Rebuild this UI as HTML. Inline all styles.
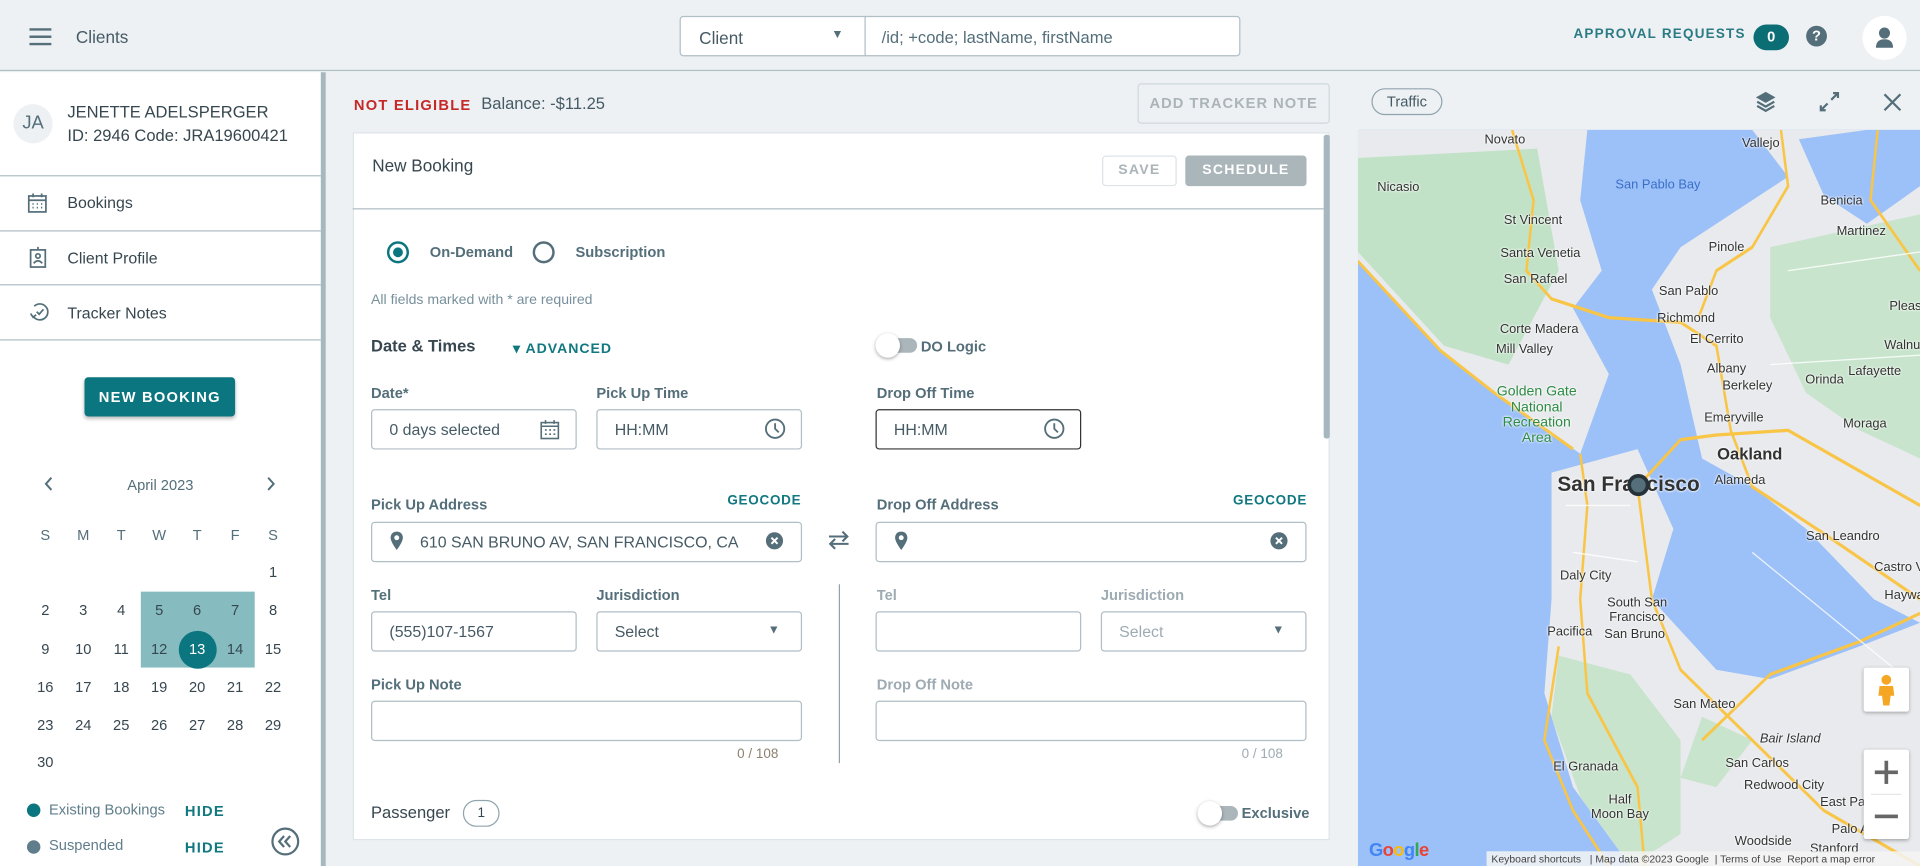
<!DOCTYPE html>
<html><head><meta charset="utf-8">
<style>
*{box-sizing:border-box;margin:0;padding:0}
html,body{width:1920px;height:866px;overflow:hidden;background:#eef1f4}
#r{position:absolute;left:0;top:0;width:1568px;height:707px;transform:scale(1.22449,1.2249);transform-origin:0 0;font-family:"Liberation Sans",sans-serif;color:#455a64;background:#eef1f4}
.a{position:absolute;white-space:nowrap}
.in{position:absolute;border:1px solid #b0bec5;border-radius:3px;background:#fff;font-size:13px;color:#455a64;padding-left:14px;display:flex;align-items:center}
.lbl{position:absolute;font-size:12px;font-weight:bold;color:#546e7a;white-space:nowrap}
.lt{color:#9eabb3}
.teal{color:#127880}
.cal{position:absolute;width:24px;text-align:center;font-size:12px;color:#37474f}
.m{position:absolute;font-size:10.5px;color:#333;white-space:nowrap;transform:translateX(-50%);text-shadow:0 0 2px #fff,0 0 2px #fff}
</style></head><body><div id="r">

<!-- header -->
<div class="a" style="left:0;top:0;width:1568px;height:58px;border-bottom:1px solid #b0bec5;background:#eef1f4"></div>
<svg class="a" style="left:24px;top:23px" width="18" height="14"><rect y="0" width="18" height="2" fill="#546e7a"/><rect y="6" width="18" height="2" fill="#546e7a"/><rect y="12" width="18" height="2" fill="#546e7a"/></svg>
<div class="a" style="left:62px;top:22px;font-size:14px;color:#455a64">Clients</div>
<div class="a" style="left:555px;top:13px;width:152px;height:33px;border:1px solid #b0bec5;border-radius:3px 0 0 3px;background:#fff"></div>
<div class="a" style="left:571px;top:23px;font-size:14px;color:#455a64">Client</div>
<div class="a" style="left:679px;top:23px;font-size:10px;color:#546e7a">▼</div>
<div class="a" style="left:706px;top:13px;width:307px;height:33px;border:1px solid #b0bec5;border-radius:0 3px 3px 0;background:#fff"></div>
<div class="a" style="left:720px;top:23px;font-size:13.5px;color:#546e7a">/id; +code; lastName, firstName</div>
<div class="a" style="left:1285px;top:22px;font-size:11px;font-weight:bold;letter-spacing:1px;color:#2a7b84">APPROVAL REQUESTS</div>
<div class="a" style="left:1432px;top:20px;width:29px;height:21px;border-radius:11px;background:#0b6e75;color:#fff;font-size:12px;font-weight:bold;text-align:center;line-height:21px">0</div>
<div class="a" style="left:1475px;top:21px;width:17px;height:17px;border-radius:50%;background:#546e7a;color:#fff;font-size:12px;font-weight:bold;text-align:center;line-height:17px">?</div>
<div class="a" style="left:1521px;top:13px;width:36px;height:36px;border-radius:50%;background:#fff"></div>
<svg class="a" style="left:1530px;top:21px" width="18" height="20"><circle cx="9" cy="6" r="4.5" fill="#546e7a"/><path d="M2 18 Q2 11 9 11 Q16 11 16 18Z" fill="#546e7a"/></svg>

<!-- left panel -->
<div class="a" style="left:0;top:59px;width:262px;height:648px;background:#fff"></div>
<div class="a" style="left:262px;top:59px;width:4px;height:648px;background:#a7b7bf"></div>
<div class="a" style="left:11px;top:85px;width:32px;height:32px;border-radius:50%;background:#eef1f4;font-size:15px;color:#546e7a;text-align:center;line-height:32px">JA</div>
<div class="a" style="left:55px;top:84px;font-size:13.5px;color:#37474f">JENETTE ADELSPERGER</div>
<div class="a" style="left:55px;top:103px;font-size:13.5px;color:#37474f">ID: 2946 Code: JRA19600421</div>
<div class="a" style="left:0;top:143px;width:262px;height:1px;background:#b0bec5"></div>
<div class="a" style="left:0;top:188px;width:262px;height:1px;background:#b0bec5"></div>
<div class="a" style="left:0;top:232px;width:262px;height:1px;background:#b0bec5"></div>
<div class="a" style="left:0;top:277px;width:262px;height:1px;background:#b0bec5"></div>
<svg class="a" style="left:22px;top:157px" width="17" height="17" fill="none" stroke="#546e7a" stroke-width="1.4"><rect x="1.5" y="3" width="14" height="13"/><line x1="1.5" y1="6.5" x2="15.5" y2="6.5"/><line x1="5" y1="1" x2="5" y2="4"/><line x1="12" y1="1" x2="12" y2="4"/><path d="M4.5 9.5h1M8 9.5h1M11.5 9.5h1M4.5 12.5h1M8 12.5h1M11.5 12.5h1"/></svg>
<div class="a" style="left:55px;top:158px;font-size:13px;color:#37474f">Bookings</div>
<svg class="a" style="left:24px;top:201px" width="14" height="18" fill="none" stroke="#546e7a" stroke-width="1.4"><rect x="1" y="3" width="12" height="14"/><circle cx="7" cy="8" r="1.8"/><path d="M3.5 14 Q7 10 10.5 14"/><line x1="7" y1="0.5" x2="7" y2="3"/></svg>
<div class="a" style="left:55px;top:203px;font-size:13px;color:#37474f">Client Profile</div>
<svg class="a" style="left:23px;top:246px" width="18" height="17" fill="none" stroke="#546e7a" stroke-width="1.4"><path d="M4 12 A6.5 6.5 0 1 0 5 4"/><path d="M2 10 L4 13 L6.5 11"/><path d="M7 8.5 L9 10.5 L12.5 6.5"/></svg>
<div class="a" style="left:55px;top:248px;font-size:13px;color:#37474f">Tracker Notes</div>
<div class="a" style="left:69px;top:308px;width:123px;height:32px;background:#0b7680;border-radius:3px;box-shadow:0 2px 3px rgba(0,0,0,.25);color:#fff;font-size:12px;font-weight:bold;letter-spacing:1px;text-align:center;line-height:32px">NEW BOOKING</div>

<svg class="a" style="left:36px;top:389px" width="8" height="12" fill="none" stroke="#546e7a" stroke-width="1.6"><path d="M6 1 L1.5 6 L6 11"/></svg>
<svg class="a" style="left:217px;top:389px" width="8" height="12" fill="none" stroke="#546e7a" stroke-width="1.6"><path d="M2 1 L6.5 6 L2 11"/></svg>
<div class="a" style="left:0;top:389px;width:262px;text-align:center;font-size:12px;color:#546e7a">April 2023</div>
<div class="a" style="left:115px;top:483px;width:93px;height:62px;background:#86bcbf"></div>
<div class="a" style="left:146px;top:515px;width:31px;height:31px;border-radius:50%;background:#0b7680"></div>
<div id="cal"></div>

<div class="a" style="left:22px;top:656px;width:11px;height:11px;border-radius:50%;background:#0b7680"></div>
<div class="a" style="left:40px;top:654px;font-size:12px;color:#607d8b">Existing Bookings</div>
<div class="a teal" style="left:151px;top:655px;font-size:12px;font-weight:bold;letter-spacing:1px">HIDE</div>
<div class="a" style="left:22px;top:686px;width:11px;height:11px;border-radius:50%;background:#607d8b"></div>
<div class="a" style="left:40px;top:683px;font-size:12px;color:#607d8b">Suspended</div>
<div class="a teal" style="left:151px;top:685px;font-size:12px;font-weight:bold;letter-spacing:1px">HIDE</div>
<svg class="a" style="left:221px;top:675px" width="24" height="24" fill="none" stroke="#546e7a" stroke-width="1.8"><circle cx="12" cy="12" r="10.5"/><path d="M11 7.5 L7 12 L11 16.5 M16 7.5 L12 12 L16 16.5"/></svg>

<!-- main -->
<div class="a" style="left:289px;top:79px;font-size:12px;font-weight:bold;letter-spacing:1px;color:#c62828">NOT ELIGIBLE</div>
<div class="a" style="left:393px;top:77px;font-size:13.5px;color:#455a64">Balance: -$11.25</div>
<div class="a" style="left:929px;top:68px;width:157px;height:33px;border:1px solid #cfd8dc;border-radius:3px;color:#aab4b9;font-size:12px;font-weight:bold;letter-spacing:.8px;text-align:center;line-height:31px">ADD TRACKER NOTE</div>

<div class="a" style="left:288px;top:108px;width:798px;height:578px;background:#fff;border:1px solid #dde3e7"></div>
<div class="a" style="left:1081px;top:110px;width:5px;height:248px;background:#a7b7bf;border-radius:2px"></div>
<div class="a" style="left:288px;top:170px;width:793px;height:1px;background:#b0bec5"></div>
<div class="a" style="left:304px;top:127px;font-size:14px;color:#37474f">New Booking</div>
<div class="a" style="left:900px;top:127px;width:61px;height:25px;border:1px solid #dde3e7;border-radius:3px;color:#aab4b9;font-size:11.5px;font-weight:bold;letter-spacing:1px;text-align:center;line-height:23px">SAVE</div>
<div class="a" style="left:968px;top:127px;width:99px;height:25px;background:#abb6bb;border-radius:3px;color:#fff;font-size:11.5px;font-weight:bold;letter-spacing:1px;text-align:center;line-height:25px">SCHEDULE</div>

<div class="a" style="left:316px;top:197px;width:18px;height:18px;border-radius:50%;border:2px solid #0b7680"></div>
<div class="a" style="left:321px;top:202px;width:8px;height:8px;border-radius:50%;background:#0b7680"></div>
<div class="lbl" style="left:351px;top:199px;font-size:12px">On-Demand</div>
<div class="a" style="left:435px;top:197px;width:18px;height:18px;border-radius:50%;border:2px solid #546e7a"></div>
<div class="lbl" style="left:470px;top:199px;font-size:12px">Subscription</div>
<div class="a" style="left:303px;top:239px;font-size:11.5px;color:#78909c">All fields marked with * are required</div>
<div class="a" style="left:303px;top:275px;font-size:13.5px;font-weight:bold;color:#37474f">Date &amp; Times</div>
<div class="a teal" style="left:419px;top:277px;font-size:11.5px;font-weight:bold;letter-spacing:.8px">▾ ADVANCED</div>
<div class="a" style="left:718px;top:276px;width:31px;height:12px;border-radius:6px;background:#abb6bb"></div>
<div class="a" style="left:715px;top:272px;width:20px;height:20px;border-radius:50%;background:#fff;box-shadow:0 1px 3px rgba(0,0,0,.35)"></div>
<div class="lbl" style="left:752px;top:276px">DO Logic</div>

<div class="lbl" style="left:303px;top:314px">Date*</div>
<div class="lbl" style="left:487px;top:314px">Pick Up Time</div>
<div class="lbl" style="left:716px;top:314px">Drop Off Time</div>
<div class="in" style="left:303px;top:334px;width:168px;height:33px">0 days selected</div>
<svg class="a" style="left:441px;top:342px" width="16" height="17" fill="none" stroke="#546e7a" stroke-width="1.3"><rect x="1" y="3" width="14" height="13"/><line x1="1" y1="6" x2="15" y2="6"/><line x1="4.5" y1="1" x2="4.5" y2="4"/><line x1="11.5" y1="1" x2="11.5" y2="4"/><path d="M4 9h1.5M7.5 9h1.5M11 9h1.5M4 12.5h1.5M7.5 12.5h1.5M11 12.5h1.5"/></svg>
<div class="in" style="left:487px;top:334px;width:168px;height:33px">HH:MM</div>
<svg class="a" style="left:624px;top:341px" width="18" height="18" fill="none" stroke="#546e7a" stroke-width="1.5"><circle cx="9" cy="9" r="7.5"/><path d="M9 4.5 V9 L12 12"/></svg>
<div class="in" style="left:715px;top:334px;width:168px;height:33px;border-color:#333">HH:MM</div>
<svg class="a" style="left:852px;top:341px" width="18" height="18" fill="none" stroke="#546e7a" stroke-width="1.5"><circle cx="9" cy="9" r="7.5"/><path d="M9 4.5 V9 L12 12"/></svg>

<div class="lbl" style="left:303px;top:405px">Pick Up Address</div>
<div class="a teal" style="left:594px;top:403px;font-size:11px;font-weight:bold;letter-spacing:.6px">GEOCODE</div>
<div class="lbl" style="left:716px;top:405px">Drop Off Address</div>
<div class="a teal" style="left:1007px;top:403px;font-size:11px;font-weight:bold;letter-spacing:.6px">GEOCODE</div>
<div class="in" style="left:303px;top:426px;width:352px;height:33px;padding-left:39px;font-size:13px">610 SAN BRUNO AV, SAN FRANCISCO, CA</div>
<svg class="a" style="left:318px;top:433px" width="12" height="17"><path d="M6 1 C2.5 1 1 3.5 1 6 C1 9.5 6 16 6 16 C6 16 11 9.5 11 6 C11 3.5 9.5 1 6 1Z" fill="#546e7a"/><circle cx="6" cy="6" r="2" fill="#fff"/></svg>
<svg class="a" style="left:625px;top:434px" width="15" height="15"><circle cx="7.5" cy="7.5" r="7" fill="#546e7a"/><path d="M5 5 L10 10 M10 5 L5 10" stroke="#fff" stroke-width="1.6"/></svg>
<svg class="a" style="left:676px;top:433px" width="18" height="16" fill="none" stroke="#546e7a" stroke-width="1.7"><path d="M1 5 H16 M12 1 L16 5 L12 9"/><path d="M17 11 H2 M6 7 L2 11 L6 15"/></svg>
<div class="in" style="left:715px;top:426px;width:352px;height:33px"></div>
<svg class="a" style="left:730px;top:433px" width="12" height="17"><path d="M6 1 C2.5 1 1 3.5 1 6 C1 9.5 6 16 6 16 C6 16 11 9.5 11 6 C11 3.5 9.5 1 6 1Z" fill="#546e7a"/><circle cx="6" cy="6" r="2" fill="#fff"/></svg>
<svg class="a" style="left:1037px;top:434px" width="15" height="15"><circle cx="7.5" cy="7.5" r="7" fill="#546e7a"/><path d="M5 5 L10 10 M10 5 L5 10" stroke="#fff" stroke-width="1.6"/></svg>

<div class="a" style="left:685px;top:477px;width:1px;height:146px;background:#90a4ae"></div>
<div class="lbl" style="left:303px;top:479px">Tel</div>
<div class="lbl" style="left:487px;top:479px">Jurisdiction</div>
<div class="lbl lt" style="left:716px;top:479px">Tel</div>
<div class="lbl lt" style="left:899px;top:479px">Jurisdiction</div>
<div class="in" style="left:303px;top:499px;width:168px;height:33px">(555)107-1567</div>
<div class="in" style="left:487px;top:499px;width:168px;height:33px">Select</div>
<div class="a" style="left:627px;top:509px;font-size:10px;color:#546e7a">▼</div>
<div class="in" style="left:715px;top:499px;width:168px;height:33px"></div>
<div class="in" style="left:899px;top:499px;width:168px;height:33px;color:#9eabb3">Select</div>
<div class="a" style="left:1039px;top:509px;font-size:10px;color:#546e7a">▼</div>

<div class="lbl" style="left:303px;top:552px">Pick Up Note</div>
<div class="lbl lt" style="left:716px;top:552px">Drop Off Note</div>
<div class="in" style="left:303px;top:572px;width:352px;height:33px"></div>
<div class="in" style="left:715px;top:572px;width:352px;height:33px"></div>
<div class="a" style="left:602px;top:610px;font-size:11px;color:#8d8070">0 / 108</div>
<div class="a" style="left:1014px;top:610px;font-size:11px;color:#9eabb3">0 / 108</div>

<div class="a" style="left:303px;top:656px;font-size:13.5px;color:#37474f">Passenger</div>
<div class="a" style="left:378px;top:653px;width:30px;height:22px;border:1px solid #90a4ae;border-radius:11px;font-size:11px;text-align:center;line-height:20px;color:#37474f">1</div>
<div class="a" style="left:981px;top:658px;width:30px;height:12px;border-radius:6px;background:#abb6bb"></div>
<div class="a" style="left:978px;top:654px;width:20px;height:20px;border-radius:50%;background:#fff;box-shadow:0 1px 3px rgba(0,0,0,.35)"></div>
<div class="lbl" style="left:1014px;top:657px">Exclusive</div>

<!-- map header -->
<div class="a" style="left:1120px;top:72px;width:58px;height:22px;border:1px solid #90a4ae;border-radius:11px;font-size:12px;text-align:center;line-height:20px;color:#455a64">Traffic</div>
<svg class="a" style="left:1433px;top:74px" width="18" height="18"><path d="M9 1 L17 5.5 L9 10 L1 5.5Z" fill="#546e7a"/><path d="M2 9 L9 13 L16 9 M2 12.5 L9 16.5 L16 12.5" fill="none" stroke="#546e7a" stroke-width="1.8"/></svg>
<svg class="a" style="left:1485px;top:74px" width="18" height="18" fill="none" stroke="#546e7a" stroke-width="1.8"><path d="M10.5 7.5 L16 2 M12 2 H16 V6 M7.5 10.5 L2 16 M2 12 V16 H6"/></svg>
<svg class="a" style="left:1538px;top:76px" width="15" height="15" stroke="#546e7a" stroke-width="1.8"><path d="M1 1 L14 14 M14 1 L1 14"/></svg>

<!-- map -->
<div class="a" style="left:1109px;top:106px;width:459px;height:601px;overflow:hidden;background:#9cc0f8">
<svg class="a" style="left:0;top:0" width="459" height="601" viewBox="0 0 1568 1568" preserveAspectRatio="none">
<path d="M0 0 L640 0 L620 150 L680 300 L600 380 L700 520 L620 690 L380 560 L230 470 L0 280Z" fill="#e8eaed"/>
<path d="M0 60 L500 40 L560 300 L420 500 L240 460 L0 260Z" fill="#c2e2c8"/>
<path d="M1100 0 L1568 0 L1568 1050 L1440 1000 L1250 850 L1100 760 L960 700 L900 500 L820 340 L900 250 L1100 150 L1200 100Z" fill="#e8eaed"/>
<path d="M1150 250 L1568 180 L1568 700 L1400 640 L1250 560 L1150 400Z" fill="#c8e4cc"/>
<path d="M1230 20 L1420 0 L1568 0 L1568 120 L1420 200 L1300 140Z" fill="#9cc0f8"/>
<path d="M540 730 L780 680 L880 850 L820 1000 L1000 1150 L1150 1170 L1400 1100 L1568 1050 L1568 1568 L760 1568 L600 1400 L520 1200 L540 1000Z" fill="#e8eaed"/>
<path d="M560 1120 L760 1160 L900 1300 L900 1500 L760 1568 L620 1420 L540 1250Z" fill="#c8e4cc"/>
<path d="M960 1250 L1100 1300 L1000 1400 L900 1380Z" fill="#c8e4cc"/>
<g fill="none" stroke="#f9c546" stroke-width="7">
<path d="M430 0 L490 150 L470 300 L540 360 L700 400 L900 410 L1000 460 L1040 640 L1100 760 L1300 860 L1568 1000"/>
<path d="M780 760 L900 660 L1000 650 L1200 640 L1568 800"/>
<path d="M620 690 L640 800 L620 1000 L640 1200 L780 1400 L800 1568"/>
<path d="M780 760 L820 1000 L900 1150 L1100 1300 L1300 1450 L1568 1568"/>
<path d="M960 1300 L1150 1160 L1400 1090 L1568 1030"/>
<path d="M1180 0 L1200 120 L1100 250 L1000 300 L950 400"/>
<path d="M1450 0 L1430 150 L1568 300"/>
<path d="M0 280 L230 470 L380 560 L600 680"/>
<path d="M560 1100 L520 1300 L600 1450 L700 1568"/>
</g>
<g fill="none" stroke="#fff" stroke-width="3" opacity=".8">
<path d="M1200 300 L1568 260 M1150 500 L1568 480 M1100 900 L1500 1150 M580 800 L760 800 M600 900 L780 920"/>
</g>
</svg>
<div class="m" style="left:120px;top:2px">Novato</div>
<div class="m" style="left:329px;top:5px">Vallejo</div>
<div class="m" style="left:33px;top:41px">Nicasio</div>
<div class="m" style="left:245px;top:39px;color:#3a6fc9;text-shadow:none">San Pablo Bay</div>
<div class="m" style="left:395px;top:52px">Benicia</div>
<div class="m" style="left:143px;top:68px">St Vincent</div>
<div class="m" style="left:411px;top:77px">Martinez</div>
<div class="m" style="left:301px;top:90px">Pinole</div>
<div class="m" style="left:149px;top:95px">Santa Venetia</div>
<div class="m" style="left:145px;top:116px">San Rafael</div>
<div class="m" style="left:270px;top:126px">San Pablo</div>
<div class="m" style="left:450px;top:138px">Pleasa</div>
<div class="m" style="left:268px;top:148px">Richmond</div>
<div class="m" style="left:148px;top:157px">Corte Madera</div>
<div class="m" style="left:293px;top:165px">El Cerrito</div>
<div class="m" style="left:136px;top:173px">Mill Valley</div>
<div class="m" style="left:446px;top:170px">Walnut</div>
<div class="m" style="left:301px;top:189px">Albany</div>
<div class="m" style="left:422px;top:191px">Lafayette</div>
<div class="m" style="left:381px;top:198px">Orinda</div>
<div class="m" style="left:318px;top:203px">Berkeley</div>
<div class="m" style="left:146px;top:208px;color:#2e8b45;font-size:11.5px;text-align:center;line-height:12.5px">Golden Gate<br>National<br>Recreation<br>Area</div>
<div class="m" style="left:307px;top:229px">Emeryville</div>
<div class="m" style="left:414px;top:234px">Moraga</div>
<div class="m" style="left:320px;top:257px;font-size:13.5px;font-weight:bold">Oakland</div>
<div class="m" style="left:312px;top:280px">Alameda</div>
<div class="m" style="left:221px;top:280px;font-size:17px;font-weight:bold">San Francisco</div>
<div class="a" style="left:220px;top:281px;width:18px;height:18px;border-radius:50%;border:3px solid #263238;background:#546e7a"></div>
<div class="m" style="left:396px;top:326px">San Leandro</div>
<div class="m" style="left:442px;top:351px">Castro V</div>
<div class="m" style="left:186px;top:358px">Daly City</div>
<div class="m" style="left:446px;top:374px">Haywa</div>
<div class="m" style="left:228px;top:380px;text-align:center;line-height:12px">South San<br>Francisco</div>
<div class="m" style="left:173px;top:404px">Pacifica</div>
<div class="m" style="left:226px;top:406px">San Bruno</div>
<div class="m" style="left:283px;top:463px">San Mateo</div>
<div class="m" style="left:353px;top:491px;font-style:italic">Bair Island</div>
<div class="m" style="left:326px;top:511px">San Carlos</div>
<div class="m" style="left:186px;top:514px">El Granada</div>
<div class="m" style="left:348px;top:529px">Redwood City</div>
<div class="m" style="left:214px;top:541px;text-align:center;line-height:12px">Half<br>Moon Bay</div>
<div class="m" style="left:397px;top:543px">East Pal</div>
<div class="m" style="left:402px;top:565px">Palo A</div>
<div class="m" style="left:331px;top:575px">Woodside</div>
<div class="m" style="left:389px;top:581px">Stanford</div>
<div class="a" style="left:413px;top:439px;width:37px;height:36px;background:#fff;border-radius:2px;box-shadow:0 1px 3px rgba(0,0,0,.3)"></div>
<svg class="a" style="left:423px;top:444px" width="17" height="27"><circle cx="8.5" cy="5" r="4" fill="#f5a623"/><path d="M3 10 H14 L15 18 H12 L11 26 H6 L5 18 H2Z" fill="#f5a623"/></svg>
<div class="a" style="left:413px;top:506px;width:37px;height:73px;background:#fff;border-radius:2px;box-shadow:0 1px 3px rgba(0,0,0,.3)"></div>
<div class="a" style="left:419px;top:542px;width:25px;height:1px;background:#e6e6e6"></div>
<svg class="a" style="left:422px;top:515px" width="19" height="56" fill="#666"><rect x="0" y="8" width="19" height="3"/><rect x="8" y="0" width="3" height="19"/><rect x="0" y="44" width="19" height="3"/></svg>
<div class="a" style="left:9px;top:580px;font-size:15px;font-weight:bold;letter-spacing:-.5px"><span style="color:#4285f4">G</span><span style="color:#ea4335">o</span><span style="color:#fbbc05">o</span><span style="color:#4285f4">g</span><span style="color:#34a853">l</span><span style="color:#ea4335">e</span></div>
<div class="a" style="left:105px;top:589px;width:354px;height:12px;background:rgba(245,245,245,.85);font-size:8.5px;color:#444;line-height:12px;white-space:nowrap;padding-left:4px">Keyboard shortcuts &nbsp;&nbsp;| Map data ©2023 Google &nbsp;| Terms of Use &nbsp;Report a map error</div>
</div>

</div>
<script>
var c=document.getElementById('cal'),h='';
var xs=[37,68,99,130,161,192,223],ys=[467,498,530,561,592,622];
['S','M','T','W','T','F','S'].forEach(function(d,i){h+='<div class="cal" style="left:'+(xs[i]-12)+'px;top:430px;color:#546e7a">'+d+'</div>';});
for(var d=1;d<=30;d++){var p=d+5,col=p%7,row=Math.floor(p/7);
h+='<div class="cal" style="left:'+(xs[col]-12)+'px;top:'+(ys[row]-7)+'px;'+(d==13?'color:#fff;':'')+'">'+d+'</div>';}
c.innerHTML=h;
</script>
</body></html>
